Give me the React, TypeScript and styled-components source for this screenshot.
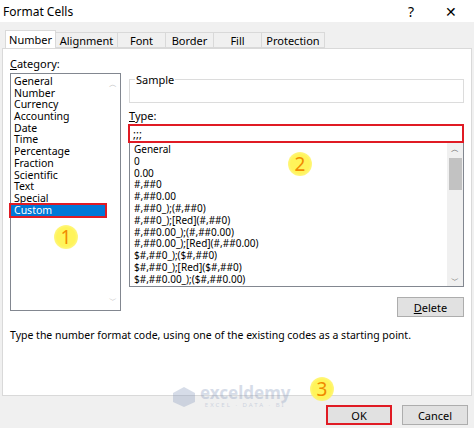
import React from 'react'
import styled, { createGlobalStyle } from 'styled-components'

const Global = createGlobalStyle`
  html, body { margin: 0; padding: 0; background: #f0f0f0; }
  body { font-family: "Noto Sans", "Open Sans", Arial, sans-serif; font-size: 11px; color: #000; }
`

const Dialog = styled.div`
  width: 474px;
  height: 428px;
  background: #f0f0f0;
  display: flex;
  flex-direction: column;
  overflow: hidden;
  position: relative;
`

const TitleBar = styled.div`
  height: 22px;
  background: #fff;
  display: flex;
  align-items: center;
  padding: 0 3px;
  font-size: 12px;
`

const TitleText = styled.div`
  flex: 1;
`

const TitleBtn = styled.div`
  width: 40px;
  text-align: center;
  font-size: 14px;
`

const Tabs = styled.div`
  display: flex;
  margin: 9px 0 0 5px;
  height: 17px;
  align-items: flex-end;
`

const Tab = styled.div<{ $active?: boolean; $w: number }>`
  width: ${(p) => p.$w}px;
  height: ${(p) => (p.$active ? 18 : 16)}px;
  background: ${(p) => (p.$active ? '#fff' : '#f0f0f0')};
  border: 1px solid #d9d9d9;
  border-bottom: ${(p) => (p.$active ? 'none' : '1px solid #d9d9d9')};
  margin-right: -1px;
  display: flex;
  align-items: center;
  justify-content: center;
  box-sizing: border-box;
  font-size: 11px;
  position: relative;
  z-index: ${(p) => (p.$active ? 2 : 1)};
`

const Panel = styled.div`
  margin: 0 2px;
  height: 348px;
  background: #fff;
  border: 1px solid #d9d9d9;
  box-sizing: border-box;
  padding: 8px 7px 0 7px;
  display: flex;
  flex-direction: column;
`

const Columns = styled.div`
  display: flex;
  gap: 8px;
`

const Label = styled.div`
  font-size: 11px;
  height: 14px;
  line-height: 14px;
`

const U = styled.span`
  text-decoration: underline;
`

const CatList = styled.div`
  width: 111px;
  height: 238px;
  border: 1px solid #828790;
  box-sizing: border-box;
  margin-top: 2px;
  padding-top: 2px;
  position: relative;
`

const Item = styled.div<{ $sel?: boolean }>`
  height: 11.7px;
  line-height: 11.7px;
  padding-left: 3px;
  width: 94px;
  box-sizing: border-box;
  font-size: 10.5px;
  background: ${(p) => (p.$sel ? '#0078d7' : 'transparent')};
  color: ${(p) => (p.$sel ? '#fff' : '#000')};
  outline: ${(p) => (p.$sel ? '2px solid #e01b24' : 'none')};
`

const Arrow = styled.div<{ $bottom?: boolean }>`
  position: absolute;
  right: 3px;
  ${(p) => (p.$bottom ? 'bottom: 4px;' : 'top: 4px;')}
  font-size: 8px;
  color: #bbb;
`

const Right = styled.div`
  flex: 1;
  display: flex;
  flex-direction: column;
  padding-top: 15px;
`

const Sample = styled.fieldset`
  margin: 0;
  height: 31px;
  border: 1px solid #dcdcdc;
  padding: 0;
  box-sizing: border-box;
  legend { font-size: 11px; padding: 0 1px; margin-left: 5px; }
`

const TypeLabel = styled(Label)`
  margin-top: 6px;
`

const TypeInput = styled.div`
  height: 19px;
  border: 2px solid #e01b24;
  box-sizing: border-box;
  padding-left: 3px;
  line-height: 15px;
  margin-top: 1px;
  margin-left: -1px;
`

const FmtList = styled.div`
  height: 144px;
  border: 1px solid #828790;
  border-top: none;
  box-sizing: border-box;
  display: flex;
`

const FmtItems = styled.div`
  flex: 1;
  padding: 1px 0 0 4px;
`

const FmtItem = styled.div`
  height: 11.8px;
  line-height: 11.8px;
  font-size: 10px;
`

const Scroll = styled.div`
  width: 16px;
  background: #f0f0f0;
  display: flex;
  flex-direction: column;
  align-items: center;
  font-size: 8px;
  color: #555;
`

const Thumb = styled.div`
  width: 13px;
  height: 32px;
  background: #c2c2c2;
  margin-top: 3px;
`

const Spacer = styled.div`
  flex: 1;
`

const Btn = styled.div<{ $hl?: boolean; $w: number }>`
  width: ${(p) => p.$w}px;
  height: 20px;
  box-sizing: border-box;
  background: #e1e1e1;
  border: ${(p) => (p.$hl ? '2px solid #e01b24' : '1px solid #adadad')};
  display: flex;
  align-items: center;
  justify-content: center;
  font-size: 11px;
`

const DeleteRow = styled.div`
  display: flex;
  justify-content: flex-end;
  margin-top: 10px;
`

const Help = styled.div`
  margin-top: 11px;
  font-size: 10.5px;
`

const Footer = styled.div`
  display: flex;
  justify-content: flex-end;
  gap: 10px;
  padding: 9px 6px 0 0;
`

const Badge = styled.div<{ $x: number; $y: number }>`
  position: absolute;
  left: ${(p) => p.$x - 12}px;
  top: ${(p) => p.$y - 12}px;
  width: 24px;
  height: 24px;
  border-radius: 50%;
  background: radial-gradient(circle, #fff45a 55%, rgba(255, 240, 80, 0.3) 100%);
  color: #f08a00;
  font-size: 19px;
  display: flex;
  align-items: center;
  justify-content: center;
  z-index: 5;
`

const Watermark = styled.div`
  position: absolute;
  left: 172px;
  top: 384px;
  display: flex;
  align-items: center;
  gap: 4px;
  opacity: 0.3;
  color: #7a8fb5;
  z-index: 4;
`

const WmText = styled.div`
  display: flex;
  flex-direction: column;
  align-items: center;
  span:first-child { font-size: 17px; font-weight: 700; line-height: 17px; }
  span:last-child { font-size: 6px; letter-spacing: 2px; }
`

const cats = ['General', 'Number', 'Currency', 'Accounting', 'Date', 'Time', 'Percentage', 'Fraction', 'Scientific', 'Text', 'Special']
const fmts = [
  'General', '0', '0.00', '#,##0', '#,##0.00', '#,##0_);(#,##0)', '#,##0_);[Red](#,##0)',
  '#,##0.00_);(#,##0.00)', '#,##0.00_);[Red](#,##0.00)', '$#,##0_);($#,##0)',
  '$#,##0_);[Red]($#,##0)', '$#,##0.00_);($#,##0.00)',
]
const tabs: [string, number][] = [['Number', 51], ['Alignment', 63], ['Font', 49], ['Border', 49], ['Fill', 49], ['Protection', 64]]

export default function App() {
  return (
    <Dialog>
      <Global />
      <TitleBar>
        <TitleText>Format Cells</TitleText>
        <TitleBtn>?</TitleBtn>
        <TitleBtn>✕</TitleBtn>
      </TitleBar>
      <Tabs>
        {tabs.map(([t, w], i) => (
          <Tab key={t} $w={w} $active={i === 0}>{t}</Tab>
        ))}
      </Tabs>
      <Panel>
        <Columns>
          <div>
            <Label><U>C</U>ategory:</Label>
            <CatList>
              <Arrow>︿</Arrow>
              {cats.map((c) => <Item key={c}>{c}</Item>)}
              <Item $sel>Custom</Item>
              <Arrow $bottom>﹀</Arrow>
            </CatList>
          </div>
          <Right>
            <Sample><legend>Sample</legend></Sample>
            <TypeLabel><U>T</U>ype:</TypeLabel>
            <TypeInput>;;;</TypeInput>
            <FmtList>
              <FmtItems>
                {fmts.map((f) => <FmtItem key={f}>{f}</FmtItem>)}
              </FmtItems>
              <Scroll>
                <div>︿</div>
                <Thumb />
                <Spacer />
                <div>﹀</div>
              </Scroll>
            </FmtList>
            <DeleteRow>
              <Btn $w={67}><U>D</U>elete</Btn>
            </DeleteRow>
          </Right>
        </Columns>
        <Help>Type the number format code, using one of the existing codes as a starting point.</Help>
      </Panel>
      <Footer>
        <Btn $w={66} $hl>OK</Btn>
        <Btn $w={66}>Cancel</Btn>
      </Footer>
      <Badge $x={66} $y={237}>1</Badge>
      <Badge $x={300} $y={164}>2</Badge>
      <Badge $x={322} $y={389}>3</Badge>
      <Watermark>
        <svg width="24" height="22" viewBox="0 0 24 22">
          <polygon points="12,1 23,7 23,16 12,21 1,16 1,7" fill="#7a8fb5" />
        </svg>
        <WmText>
          <span>exceldemy</span>
          <span>EXCEL · DATA · BI</span>
        </WmText>
      </Watermark>
    </Dialog>
  )
}
